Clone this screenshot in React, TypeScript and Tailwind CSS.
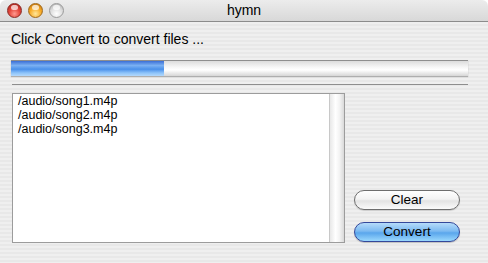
const files = ["/audio/song1.m4p", "/audio/song2.m4p", "/audio/song3.m4p"];

function Light({ kind }: { kind: "red" | "yellow" | "gray" }) {
  const fill =
    kind === "red"
      ? "bg-[radial-gradient(circle_at_50%_75%,#ff9a90_0%,#e5483d_45%,#a31c15_100%)] border-[#8a2a25]"
      : kind === "yellow"
        ? "bg-[radial-gradient(circle_at_50%_75%,#ffe79a_0%,#f7aa25_50%,#b86a08_100%)] border-[#a0681a]"
        : "bg-[radial-gradient(circle_at_50%_75%,#ffffff_0%,#dedede_50%,#a9a9a9_100%)] border-[#9a9a9a]";
  return (
    <div className={`relative h-[15px] w-[15px] rounded-full border ${fill}`}>
      <div className="absolute left-[3px] top-[1px] h-[5px] w-[7px] rounded-full bg-white/70" />
    </div>
  );
}

function PillButton({ label, primary }: { label: string; primary?: boolean }) {
  return (
    <button
      type="button"
      className={
        primary
          ? "flex h-[20px] w-[106px] items-center justify-center rounded-full border border-[#34489a] bg-[linear-gradient(180deg,#b5dbfa_0%,#7dbaf1_45%,#5aa6ec_55%,#9ad8fd_100%)] text-[13.5px] leading-none text-black shadow-[0_1px_1px_rgba(0,0,0,0.2)]"
          : "flex h-[20px] w-[106px] items-center justify-center rounded-full border border-[#6e6e6e] bg-[linear-gradient(180deg,#ffffff_0%,#f3f3f3_45%,#e3e3e3_55%,#fbfbfb_100%)] text-[13.5px] leading-none text-black shadow-[0_1px_1px_rgba(0,0,0,0.15)]"
      }
    >
      {label}
    </button>
  );
}

export default function App() {
  return (
    <div className="h-[263px] w-[488px] overflow-hidden bg-white font-['Liberation_Sans',Arial,sans-serif]">
      <div className="flex h-full flex-col overflow-hidden rounded-t-[6px]">
        <div className="relative flex h-[22px] shrink-0 items-center border-b border-[#8c8c8c] bg-[linear-gradient(180deg,#ececec_0%,#d8d8d8_100%)] pl-[7px]">
          <div className="flex gap-[6px]">
            <Light kind="red" />
            <Light kind="yellow" />
            <Light kind="gray" />
          </div>
          <div className="absolute inset-x-0 top-0 flex h-full items-center justify-center text-[14px] text-black">
            hymn
          </div>
        </div>

        <div className="flex flex-1 flex-col bg-[image:repeating-linear-gradient(180deg,#efefef_0px,#efefef_2px,#e8e8e8_2px,#e8e8e8_4px)] pl-[11px] pr-[20px] pt-[9px]">
          <div className="text-[14px] leading-[16px] text-black">Click Convert to convert files ...</div>

          <div className="mt-[13px] flex h-[16px] w-[457px] border-t border-[#8e8e8e] bg-[linear-gradient(180deg,#dcdcdc_0%,#f6f6f6_40%,#ffffff_60%,#d6d6d6_100%)] shadow-[0_1px_1px_rgba(0,0,0,0.25)]">
            <div className="h-full w-[153px] bg-[linear-gradient(180deg,#3b6fd6_0%,#7ab0f2_30%,#4a90ea_55%,#8ec4fa_80%,#b3d8fb_100%)]" />
          </div>

          <div className="ml-[1px] mt-[8px] h-[1px] w-[456px] bg-[#8e8e8e]" />

          <div className="mt-[8px] flex items-end">
            <div className="ml-[1px] flex h-[150px] w-[333px] border border-[#9c9c9c] bg-white">
              <div className="flex flex-1 flex-col pl-[5px] text-[12.5px] leading-[14px] text-black">
                {files.map((f) => (
                  <div key={f}>{f}</div>
                ))}
              </div>
              <div className="w-[15px] border-l border-[#c8c8c8] bg-[linear-gradient(90deg,#e8e8e8_0%,#ffffff_40%,#f2f2f2_70%,#d9d9d9_100%)]" />
            </div>

            <div className="ml-[9px] flex flex-col gap-[12px] pb-[1px]">
              <PillButton label="Clear" />
              <PillButton label="Convert" primary />
            </div>
          </div>
        </div>
      </div>
    </div>
  );
}
